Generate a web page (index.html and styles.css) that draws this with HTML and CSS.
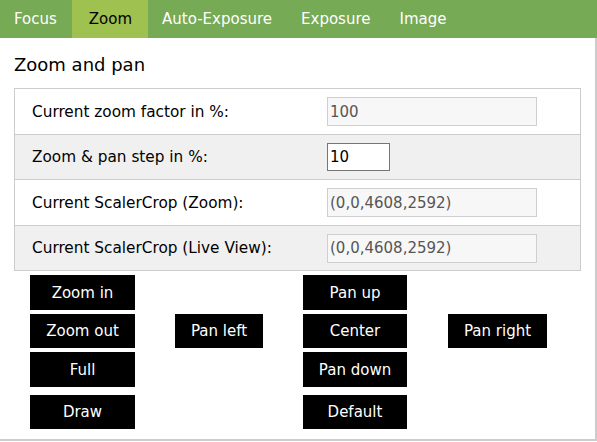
FILE: index.html
```html
<!DOCTYPE html>
<html>
<head>
<meta charset="utf-8">
<link rel="stylesheet" href="styles.css">
</head>
<body>
<nav class="tabs">
  <a class="tab">Focus</a>
  <a class="tab active">Zoom</a>
  <a class="tab">Auto-Exposure</a>
  <a class="tab">Exposure</a>
  <a class="tab">Image</a>
</nav>
<main class="page">
  <h2 class="title">Zoom and pan</h2>
  <div class="table">
    <div class="row">
      <span class="label">Current zoom factor in %:</span>
      <input class="field ro" type="text" value="100" readonly>
    </div>
    <div class="row alt">
      <span class="label">Zoom &amp; pan step in %:</span>
      <input class="field step" type="text" value="10">
    </div>
    <div class="row">
      <span class="label">Current ScalerCrop (Zoom):</span>
      <input class="field ro" type="text" value="(0,0,4608,2592)" readonly>
    </div>
    <div class="row alt">
      <span class="label">Current ScalerCrop (Live View):</span>
      <input class="field ro" type="text" value="(0,0,4608,2592)" readonly>
    </div>
  </div>
  <div class="controls">
    <button class="btn c1 r1">Zoom in</button>
    <button class="btn c3 r1">Pan up</button>
    <button class="btn c1 r2">Zoom out</button>
    <button class="btn c2 r2 natural">Pan left</button>
    <button class="btn c3 r2">Center</button>
    <button class="btn c4 r2 natural">Pan right</button>
    <button class="btn c1 r3">Full</button>
    <button class="btn c3 r3">Pan down</button>
    <button class="btn c1 r4">Draw</button>
    <button class="btn c3 r4">Default</button>
  </div>
</main>
</body>
</html>
```

FILE: styles.css
```css
* { box-sizing: border-box; }
html, body {
  margin: 0;
  padding: 0;
  background: #fff;
  font-family: "DejaVu Sans", Verdana, sans-serif;
  color: #000;
}
.tabs {
  display: flex;
  height: 38px;
  width: 597px;
  background: #76aa55;
}
.tab {
  display: block;
  line-height: 38px;
  padding: 0 15px 0 14px;
  font-size: 15px;
  color: #fff;
}
.tab.active {
  background: #9fc150;
  color: #000;
  padding: 0 16px 0 17px;
}
.page {
  width: 597px;
  height: 403px;
  border-right: 2px solid #cccccc;
  border-bottom: 2px solid #cccccc;
  padding: 0 14px 0 14px;
}
.title {
  margin: 0;
  padding-top: 14px;
  height: 50px;
  line-height: 26px;
  font-size: 18px;
  font-weight: normal;
}
.table {
  border: 1px solid #cccccc;
}
.row {
  display: grid;
  grid-template-columns: 312px 1fr;
  align-items: center;
  height: 46px;
  border-bottom: 1px solid #cccccc;
  background: #fff;
}
.row:nth-child(2) { height: 45px; }
.row:last-child { border-bottom: none; height: 44px; }
.row.alt { background: #f0f0f0; }
.label {
  padding-left: 17px;
  font-size: 15.3px;
}
.field {
  font-family: "DejaVu Sans", Verdana, sans-serif;
  font-size: 15px;
  padding: 0 2px;
  margin: 0;
  outline: none;
}
.field.ro {
  width: 210px;
  height: 29px;
  background: #f7f7f7;
  border: 1px solid #cfcfcf;
  color: #555;
}
.field.step {
  width: 63px;
  height: 28px;
  background: #fff;
  border: 1px solid #767676;
  color: #000;
}
.controls {
  display: grid;
  grid-template-columns: 105px 168px 104px 181px;
  grid-template-rows: 35px 34px 35px 34px;
  row-gap: 4px;
  margin: 4px 0 0 16px;
}
.controls .r4 { margin-top: 4px; }
.btn {
  background: #000;
  color: #fff;
  border: none;
  margin: 0;
  padding: 0;
  font-family: "DejaVu Sans", Verdana, sans-serif;
  font-size: 15px;
  width: 100%;
  height: 100%;
}
.btn.natural {
  width: auto;
  padding: 0 16px;
  justify-self: center;
}
.c1 { grid-column: 1; }
.c2 { grid-column: 2; }
.c3 { grid-column: 3; }
.c4 { grid-column: 4; }
.r1 { grid-row: 1; }
.r2 { grid-row: 2; }
.r3 { grid-row: 3; }
.r4 { grid-row: 4; height: 34px; }
```
